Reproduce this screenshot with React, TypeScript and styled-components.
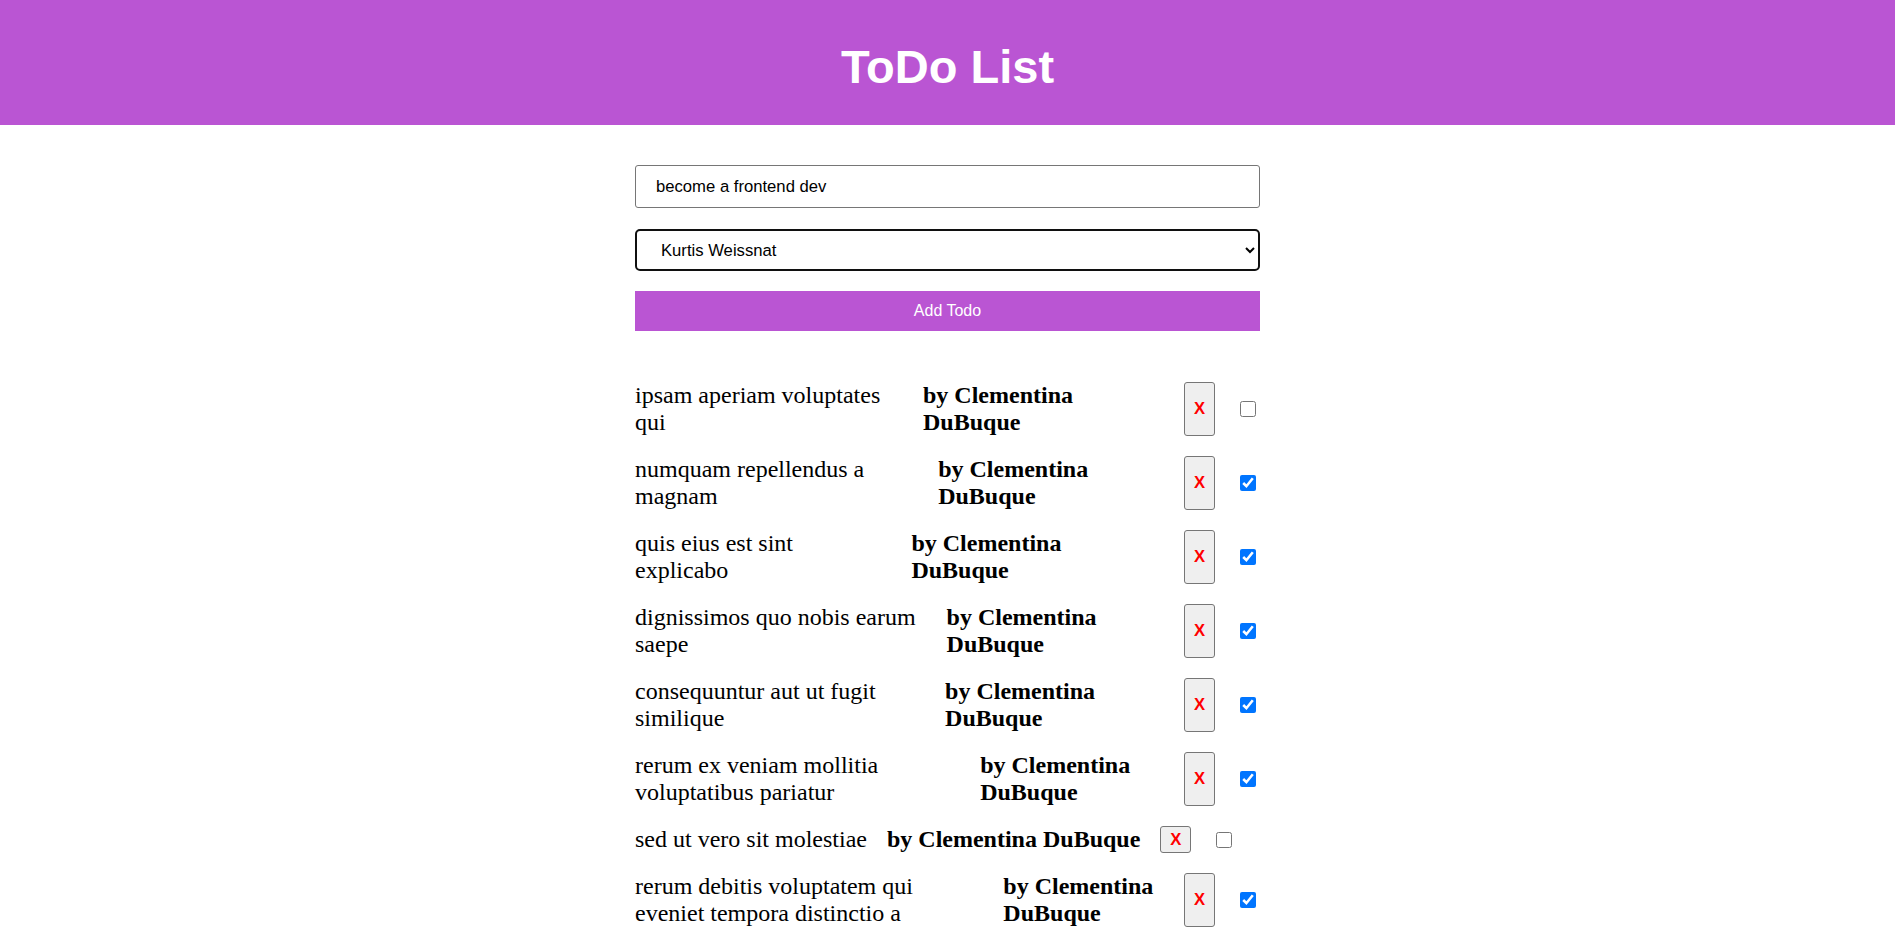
import React from "react";
import styled, { createGlobalStyle } from "styled-components";

const todos = [
  { title: "ipsam aperiam voluptates qui", done: false },
  { title: "numquam repellendus a magnam", done: true },
  { title: "quis eius est sint explicabo", done: true },
  { title: "dignissimos quo nobis earum saepe", done: true },
  { title: "consequuntur aut ut fugit similique", done: true },
  { title: "rerum ex veniam mollitia voluptatibus pariatur", done: true },
  { title: "sed ut vero sit molestiae", done: false },
  { title: "rerum debitis voluptatem qui eveniet tempora distinctio a", done: true },
];

function App() {
  return (
    <>
      <GlobalStyle />
      <Header>
        <Title>ToDo List</Title>
      </Header>
      <PageContainer>
        <Form onSubmit={(e) => e.preventDefault()}>
          <TextInput type="text" defaultValue="become a frontend dev" />
          <UserSelect defaultValue="Kurtis Weissnat">
            <option>Leanne Graham</option>
            <option>Ervin Howell</option>
            <option>Clementine Bauch</option>
            <option>Patricia Lebsack</option>
            <option>Chelsey Dietrich</option>
            <option>Mrs. Dennis Schulist</option>
            <option>Kurtis Weissnat</option>
            <option>Nicholas Runolfsdottir V</option>
            <option>Glenna Reichert</option>
            <option>Clementina DuBuque</option>
          </UserSelect>
          <AddButton type="submit">Add Todo</AddButton>
        </Form>
        <TodoList>
          {todos.map((todo, i) => (
            <TodoRow key={i}>
              <TodoTitle>{todo.title}</TodoTitle>
              <TodoAuthor>by Clementina DuBuque</TodoAuthor>
              <DeleteButton>X</DeleteButton>
              <DoneCheckbox type="checkbox" defaultChecked={todo.done} />
            </TodoRow>
          ))}
        </TodoList>
      </PageContainer>
    </>
  );
}

export default App;

const GlobalStyle = createGlobalStyle`
  body {
    margin: 0;
    font-family: "Liberation Serif", "Times New Roman", serif;
    background: #fff;
  }
`;

const Header = styled.header`
  height: 125px;
  box-sizing: border-box;
  padding-top: 8px;
  background: #ba55d3;
  display: flex;
  align-items: center;
  justify-content: center;
`;

const Title = styled.h1`
  margin: 0;
  color: #fff;
  font-family: "Liberation Sans", Arial, sans-serif;
  font-size: 47px;
  font-weight: bold;
`;

const PageContainer = styled.main`
  width: 625px;
  margin: 40px auto 0;
  display: flex;
  flex-direction: column;
`;

const Form = styled.form`
  display: flex;
  flex-direction: column;
`;

const TextInput = styled.input`
  height: 43px;
  box-sizing: border-box;
  padding: 0 20px;
  border: 1px solid #767676;
  border-radius: 3px;
  font-family: "Liberation Sans", Arial, sans-serif;
  font-size: 16.67px;
  color: #000;
  outline: none;
`;

const UserSelect = styled.select`
  height: 42px;
  margin-top: 21px;
  box-sizing: border-box;
  padding: 0 10px 0 20px;
  border: 2px solid #101010;
  border-radius: 5px;
  background: #fff;
  font-family: "Liberation Sans", Arial, sans-serif;
  font-size: 16.67px;
  color: #000;
`;

const AddButton = styled.button`
  height: 40px;
  margin-top: 20px;
  border: none;
  background: #ba55d3;
  color: #fff;
  font-family: "Liberation Sans", Arial, sans-serif;
  font-size: 16px;
  cursor: pointer;
`;

const TodoList = styled.div`
  margin-top: 51px;
  display: flex;
  flex-direction: column;
  gap: 20px;
`;

const TodoRow = styled.div`
  display: flex;
  gap: 20px;
`;

const TodoTitle = styled.span`
  font-size: 24px;
  line-height: 27px;
  color: #000;
`;

const TodoAuthor = styled.span`
  font-size: 24px;
  line-height: 27px;
  font-weight: bold;
  color: #000;
`;

const DeleteButton = styled.button`
  padding: 1px 9px;
  border: 1px solid #767676;
  border-radius: 3px;
  background: #efefef;
  color: red;
  font-family: "Liberation Sans", Arial, sans-serif;
  font-size: 16.67px;
  font-weight: bold;
  cursor: pointer;
`;

const DoneCheckbox = styled.input`
  width: 16px;
  height: 16px;
  margin: 4px 4px 4px 5px;
  align-self: center;
  flex-shrink: 0;
`;
